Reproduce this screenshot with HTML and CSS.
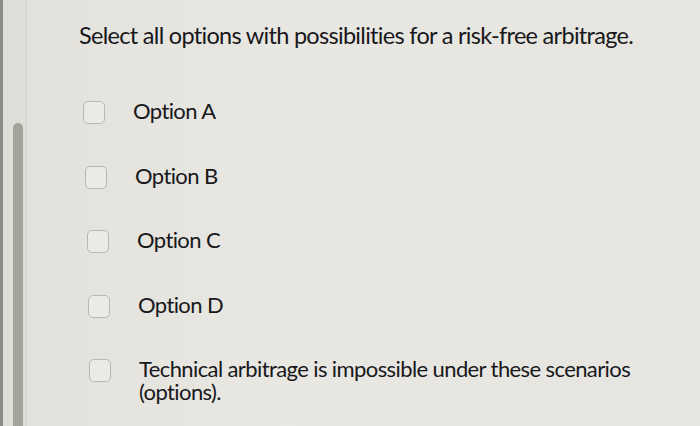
FILE: index.html
```html
<!DOCTYPE html>
<html>
<head>
<meta charset="utf-8">
<link rel="stylesheet" href="styles.css">
</head>
<body>
<div class="screen">
  <div class="edge"></div>
  <div class="rail"><div class="thumb"></div></div>
  <div class="content">
    <h1 class="question">Select all options with possibilities for a risk-free arbitrage.</h1>
    <ul class="options">
      <li class="opt"><span class="box"></span><span class="label">Option A</span></li>
      <li class="opt"><span class="box"></span><span class="label">Option B</span></li>
      <li class="opt"><span class="box"></span><span class="label">Option C</span></li>
      <li class="opt"><span class="box"></span><span class="label">Option D</span></li>
      <li class="opt"><span class="box"></span><span class="label">Technical arbitrage is impossible under these scenarios (options).</span></li>
    </ul>
  </div>
</div>
</body>
</html>
```
FILE: styles.css
```css
html, body {
  margin: 0;
  padding: 0;
  width: 700px;
  height: 426px;
  overflow: hidden;
  background: #e6e5e0;
}
.screen {
  display: flex;
  width: 700px;
  height: 426px;
  background: linear-gradient(90deg, #e2e1dc 0%, #e8e7e2 40%, #e6e5e0 100%);
  font-family: Lato, "Liberation Sans", sans-serif;
  color: #18181b;
}
.edge {
  width: 3px;
  background: #8c8c86;
  flex: none;
}
.rail {
  width: 24px;
  flex: none;
  background: #deddd7;
  border-right: 1px solid #d2d1cb;
  padding-top: 123px;
  padding-left: 10px;
  box-sizing: border-box;
}
.thumb {
  width: 10px;
  height: 320px;
  background: #a4a49d;
  border-radius: 5px 5px 0 0;
}
.content {
  padding-left: 52px;
  padding-top: 20px;
}
.question {
  margin: 0;
  font-weight: 400;
  font-size: 23.5px;
  line-height: 30px;
  letter-spacing: -0.7px;
  white-space: nowrap;
}
.options {
  list-style: none;
  margin: 0;
  padding: 49px 0 0 4px;
  display: flex;
  flex-direction: column;
  gap: 39.5px;
}
.opt {
  display: flex;
  align-items: flex-start;
}
.opt:nth-child(2) { padding-left: 2px; }
.opt:nth-child(3) { padding-left: 4px; }
.opt:nth-child(4) { padding-left: 5px; }
.opt:nth-child(5) { padding-left: 6px; }
.box {
  flex: none;
  width: 20px;
  height: 21px;
  border: 1.5px solid #b8b7b2;
  border-radius: 5px;
  background: #ebeae5;
  margin-top: 2px;
  margin-right: 28px;
}
.label {
  font-size: 22px;
  line-height: 23px;
  letter-spacing: -0.6px;
  width: 500px;
}
```
